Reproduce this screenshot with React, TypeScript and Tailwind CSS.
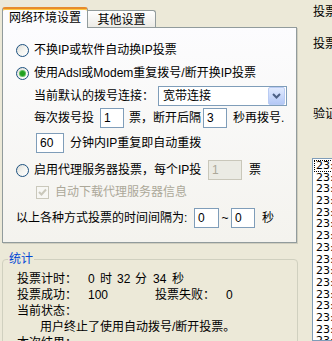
import clsx from "clsx";

const Radio = ({ checked }: { checked?: boolean }) => (
  <span className="flex h-[13px] w-[13px] shrink-0 items-center justify-center rounded-full border border-[#1C5180] bg-linear-to-br from-[#DCDCD7] via-[#F4F4F0] to-white">
    {checked && (
      <span className="h-[5px] w-[5px] rounded-full bg-[#21A121] shadow-[0_0_0_1px_#5FC15F]" />
    )}
  </span>
);

const Box = ({
  value,
  className,
  disabled,
}: {
  value: string;
  className: string;
  disabled?: boolean;
}) => (
  <span
    className={clsx(
      "flex h-[20px] shrink-0 items-center border pl-[3px] leading-none",
      disabled
        ? "border-[#C9C7BA] bg-[#EBEBE4] text-[#ACA899]"
        : "border-[#7F9DB9] bg-white text-black",
      className
    )}
  >
    {value}
  </span>
);

const logs = Array(16).fill("23:");

const App = () => {
  return (
    <div className="flex h-[341px] w-[332px] overflow-hidden bg-[#ECE9D8] font-['Liberation_Sans','Noto_Sans_CJK_SC',sans-serif] text-[12px] text-black">
      <div className="flex w-[298px] shrink-0 flex-col pl-[2px]">
        {/* tabs */}
        <div className="flex h-[27px] shrink-0 items-end">
          <div className="relative z-10 -mb-px flex h-[21px] w-[86px] items-center justify-center rounded-t-[3px] border-x border-t-2 border-x-[#919B9C] border-t-[#E68B2C] bg-[#FCFCFE] pb-[1px] shadow-[inset_0_1px_0_#FFC73C]">
            网络环境设置
          </div>
          <div className="flex h-[17px] w-[68px] items-center justify-center rounded-tr-[3px] border-t border-r border-[#919B9C] bg-linear-to-b from-white to-[#ECEBE6] pt-[1px]">
            其他设置
          </div>
        </div>

        {/* panel */}
        <div className="flex h-[216px] w-[295px] shrink-0 flex-col border border-[#919B9C] bg-linear-to-b from-[#FCFCFE] to-[#F4F3EE] shadow-[1px_1px_0_#D0CEBF]">
          <div className="mt-[11px] flex h-[22px] items-center gap-[5px] pl-[13px]">
            <Radio />
            <span>不换IP或软件自动换IP投票</span>
          </div>
          <div className="mt-[1px] flex h-[22px] items-center gap-[5px] pl-[13px]">
            <Radio checked />
            <span>使用Adsl或Modem重复拨号/断开换IP投票</span>
          </div>
          <div className="mt-[2px] flex h-[20px] items-center pl-[31px]">
            <span className="w-[124px] shrink-0">当前默认的拨号连接：</span>
            <div className="flex h-[20px] w-[129px] items-center justify-between border border-[#7F9DB9] bg-white pl-[4px] pr-px">
              <span>宽带连接</span>
              <span className="flex h-[18px] w-[17px] items-center justify-center rounded-[2px] border border-[#B9CBF3] bg-linear-to-b from-[#E1EAFE] to-[#B4C8F6]">
                <svg width="9" height="6" viewBox="0 0 9 6">
                  <polyline
                    points="1,1 4.5,4.5 8,1"
                    fill="none"
                    stroke="#4D6185"
                    strokeWidth="2"
                  />
                </svg>
              </span>
            </div>
          </div>
          <div className="mt-[2px] flex h-[20px] items-center pl-[31px]">
            <span className="w-[66px] shrink-0">每次拨号投</span>
            <Box value="1" className="w-[24px]" />
            <span className="ml-[5px] w-[74px] shrink-0">票，断开后隔</span>
            <Box value="3" className="w-[24px]" />
            <span className="ml-[6px]">秒再拨号.</span>
          </div>
          <div className="mt-[5px] flex h-[20px] items-center pl-[33px]">
            <Box value="60" className="w-[28px]" />
            <span className="ml-[6px]">分钟内IP重复即自动重拨</span>
          </div>
          <div className="mt-[7px] flex h-[20px] items-center pl-[13px]">
            <Radio />
            <span className="ml-[5px] w-[174px] shrink-0">启用代理服务器投票，每个IP投</span>
            <Box value="1" className="w-[34px]" disabled />
            <span className="ml-[7px]">票</span>
          </div>
          <div className="mt-[2px] flex h-[20px] items-center pl-[33px] text-[#ACA899]">
            <span className="flex h-[13px] w-[13px] shrink-0 items-center justify-center border border-[#CAC8BB] bg-[#F7F7F4]">
              <svg width="9" height="9" viewBox="0 0 9 9">
                <polyline
                  points="1,4 3.5,6.5 8,1.5"
                  fill="none"
                  stroke="#CAC8BB"
                  strokeWidth="2"
                />
              </svg>
            </span>
            <span className="ml-[6px]">自动下载代理服务器信息</span>
          </div>
          <div className="mt-[5px] flex h-[21px] items-center pl-[13px]">
            <span className="w-[178px] shrink-0">以上各种方式投票的时间间隔为:</span>
            <Box value="0" className="w-[25px]" />
            <span className="w-[12px] text-center">~</span>
            <Box value="0" className="w-[24px]" />
            <span className="ml-[7px]">秒</span>
          </div>
        </div>

        {/* statistics */}
        <fieldset className="mt-[9px] w-[296px] shrink-0 rounded-[4px] border border-[#D0D0BF] pl-[5px]">
          <legend className="px-[1px] leading-[14px] text-[#0046D5]">统计</legend>
          <div className="mt-[5px] flex flex-col pl-[9px] leading-[16px]">
            <div className="flex">
              <span className="w-[71px]">投票计时：</span>
              <span className="w-[12px]">0</span>
              <span className="w-[17px]">时</span>
              <span className="w-[18px]">32</span>
              <span className="w-[18px]">分</span>
              <span className="w-[19px]">34</span>
              <span>秒</span>
            </div>
            <div className="flex">
              <span className="w-[71px]">投票成功：</span>
              <span className="w-[67px]">100</span>
              <span className="w-[71px]">投票失败：</span>
              <span>0</span>
            </div>
            <div>当前状态：</div>
            <div className="pl-[23px]">用户终止了使用自动拨号/断开投票。</div>
            <div>本次结果：</div>
          </div>
        </fieldset>
      </div>

      {/* right column */}
      <div className="flex min-w-0 flex-1 flex-col pl-[14px]">
        <span className="ml-px mt-[5px] h-[14px] shrink-0 whitespace-nowrap leading-[14px]">投票</span>
        <span className="ml-px mt-[18px] h-[14px] shrink-0 whitespace-nowrap leading-[14px]">投票</span>
        <span className="ml-px mt-[56px] h-[14px] shrink-0 whitespace-nowrap leading-[14px]">验证</span>
        <div className="mt-[37px] w-[40px] flex-1 overflow-hidden border border-[#7F9DB9] bg-white pl-px pt-px font-['DejaVu_Sans',sans-serif] text-[11px]">
          {logs.map((t, i) => (
            <div
              key={i}
              className={clsx(
                "h-[11.7px] pl-[2px] leading-[11.7px]",
                i === 0 && "outline outline-1 outline-dotted outline-black -outline-offset-1"
              )}
            >
              {t}
            </div>
          ))}
        </div>
      </div>
    </div>
  );
};

export default App;
